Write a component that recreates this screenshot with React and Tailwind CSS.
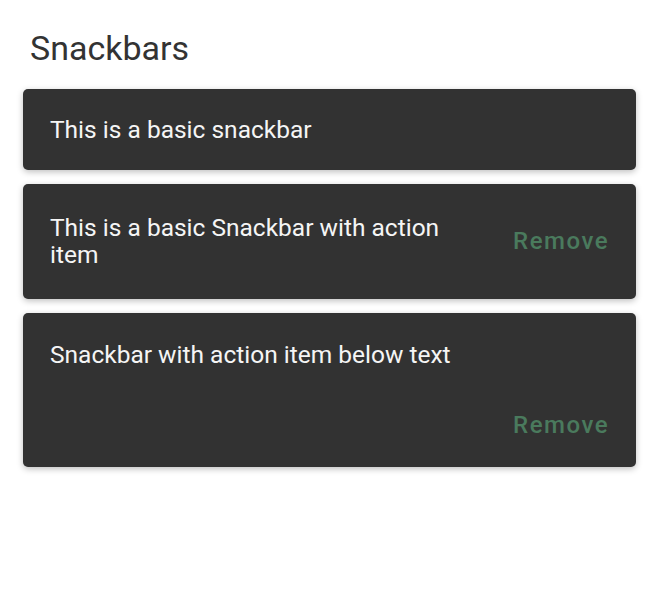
import React from 'react';

const Snackbar = ({ children, action, stacked, pad = 'py-[27px]' }) => {
  if (stacked) {
    return (
      <div className="rounded-[5px] bg-[#323232] pl-[27px] pr-[27px] pt-[28px] pb-[28px] shadow-[0_2px_6px_rgba(0,0,0,0.25)]">
        <p className="text-[24.5px] leading-[27px] text-[#f5f5f5]">{children}</p>
        <div className="mt-[44px] flex justify-end">
          <button className="text-[24px] leading-[27px] font-medium tracking-[1.5px] text-[#4a7a5d]">{action}</button>
        </div>
      </div>
    );
  }
  return (
    <div className={`flex items-center justify-between rounded-[5px] bg-[#323232] pl-[27px] pr-[27px] shadow-[0_2px_6px_rgba(0,0,0,0.25)] ${pad}`}>
      <p className="max-w-[420px] text-[24.5px] leading-[27px] text-[#f5f5f5]">{children}</p>
      {action && (
        <button className="text-[24px] leading-[27px] font-medium tracking-[1.5px] text-[#4a7a5d]">{action}</button>
      )}
    </div>
  );
};

export default function App() {
  return (
    <div className="min-h-screen bg-white px-[23px] pt-[28px] font-['Roboto',sans-serif]">
      <h1 className="pl-[7px] text-[34px] leading-[40px] text-[#333333]">Snackbars</h1>
      <div className="mt-[21px] flex w-[613px] flex-col gap-[14px]">
        <Snackbar>This is a basic snackbar</Snackbar>
        <Snackbar action="Remove" pad="pt-[30px] pb-[31px]">This is a basic Snackbar with action item</Snackbar>
        <Snackbar action="Remove" stacked>Snackbar with action item below text</Snackbar>
      </div>
    </div>
  );
}
